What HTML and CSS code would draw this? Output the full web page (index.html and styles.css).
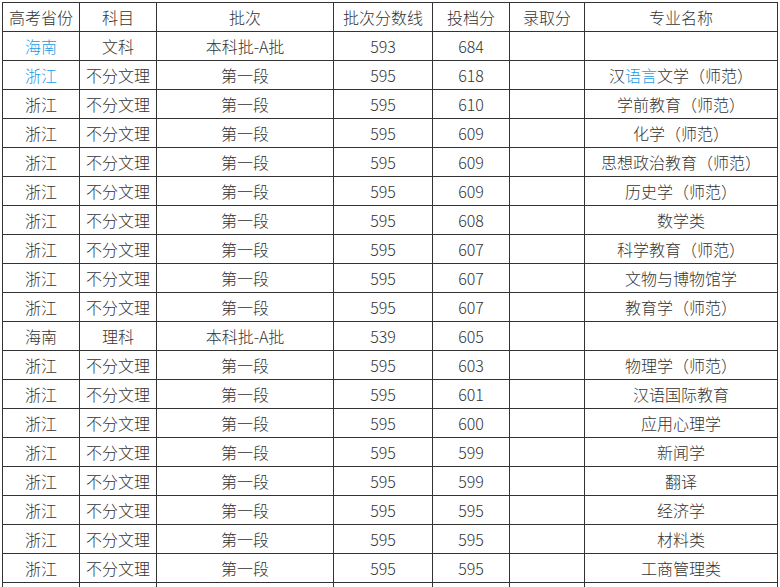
FILE: index.html
```html
<!DOCTYPE html>
<html lang="zh-CN">
<head>
<meta charset="utf-8">
<title>录取分数</title>
<link rel="stylesheet" href="styles.css">
</head>
<body>
<table class="scores">
  <colgroup>
    <col class="c1"><col class="c2"><col class="c3"><col class="c4"><col class="c5"><col class="c6"><col class="c7">
  </colgroup>
  <thead>
    <tr><th>高考省份</th><th>科目</th><th>批次</th><th>批次分数线</th><th>投档分</th><th>录取分</th><th>专业名称</th></tr>
  </thead>
  <tbody>
    <tr><td class="hl">海南</td><td>文科</td><td>本科批-A批</td><td>593</td><td>684</td><td></td><td></td></tr>
    <tr><td class="hl">浙江</td><td>不分文理</td><td>第一段</td><td>595</td><td>618</td><td></td><td>汉<span class="hl">语言</span>文学（师范）</td></tr>
    <tr><td>浙江</td><td>不分文理</td><td>第一段</td><td>595</td><td>610</td><td></td><td>学前教育（师范）</td></tr>
    <tr><td>浙江</td><td>不分文理</td><td>第一段</td><td>595</td><td>609</td><td></td><td>化学（师范）</td></tr>
    <tr><td>浙江</td><td>不分文理</td><td>第一段</td><td>595</td><td>609</td><td></td><td>思想政治教育（师范）</td></tr>
    <tr><td>浙江</td><td>不分文理</td><td>第一段</td><td>595</td><td>609</td><td></td><td>历史学（师范）</td></tr>
    <tr><td>浙江</td><td>不分文理</td><td>第一段</td><td>595</td><td>608</td><td></td><td>数学类</td></tr>
    <tr><td>浙江</td><td>不分文理</td><td>第一段</td><td>595</td><td>607</td><td></td><td>科学教育（师范）</td></tr>
    <tr><td>浙江</td><td>不分文理</td><td>第一段</td><td>595</td><td>607</td><td></td><td>文物与博物馆学</td></tr>
    <tr><td>浙江</td><td>不分文理</td><td>第一段</td><td>595</td><td>607</td><td></td><td>教育学（师范）</td></tr>
    <tr><td>海南</td><td>理科</td><td>本科批-A批</td><td>539</td><td>605</td><td></td><td></td></tr>
    <tr><td>浙江</td><td>不分文理</td><td>第一段</td><td>595</td><td>603</td><td></td><td>物理学（师范）</td></tr>
    <tr><td>浙江</td><td>不分文理</td><td>第一段</td><td>595</td><td>601</td><td></td><td>汉语国际教育</td></tr>
    <tr><td>浙江</td><td>不分文理</td><td>第一段</td><td>595</td><td>600</td><td></td><td>应用心理学</td></tr>
    <tr><td>浙江</td><td>不分文理</td><td>第一段</td><td>595</td><td>599</td><td></td><td>新闻学</td></tr>
    <tr><td>浙江</td><td>不分文理</td><td>第一段</td><td>595</td><td>599</td><td></td><td>翻译</td></tr>
    <tr><td>浙江</td><td>不分文理</td><td>第一段</td><td>595</td><td>595</td><td></td><td>经济学</td></tr>
    <tr><td>浙江</td><td>不分文理</td><td>第一段</td><td>595</td><td>595</td><td></td><td>材料类</td></tr>
    <tr><td>浙江</td><td>不分文理</td><td>第一段</td><td>595</td><td>595</td><td></td><td>工商管理类</td></tr>
    <tr><td></td><td></td><td></td><td></td><td></td><td></td><td></td></tr>
  </tbody>
</table>
</body>
</html>
```

FILE: styles.css
```css
html, body {
  overflow: hidden;
}
body {
  margin: 2px 0 0 2px;
  background: #fff;
  font-family: "Noto Sans CJK SC", "Noto Sans", sans-serif;
  font-size: 16px;
  font-weight: 300;
  color: #333;
}
.scores {
  border-collapse: collapse;
  table-layout: fixed;
  width: 775px;
}
.c1 { width: 77px; }
.c2 { width: 77px; }
.c3 { width: 177px; }
.c4 { width: 99px; }
.c5 { width: 77px; }
.c6 { width: 75px; }
.c7 { width: 193px; }
.scores th,
.scores td {
  border: 1px solid #333;
  height: 28px;
  padding: 0;
  text-align: center;
  vertical-align: middle;
  font-weight: 300;
  line-height: 20px;
  white-space: nowrap;
}
.hl {
  color: #1a9be6;
}
```
